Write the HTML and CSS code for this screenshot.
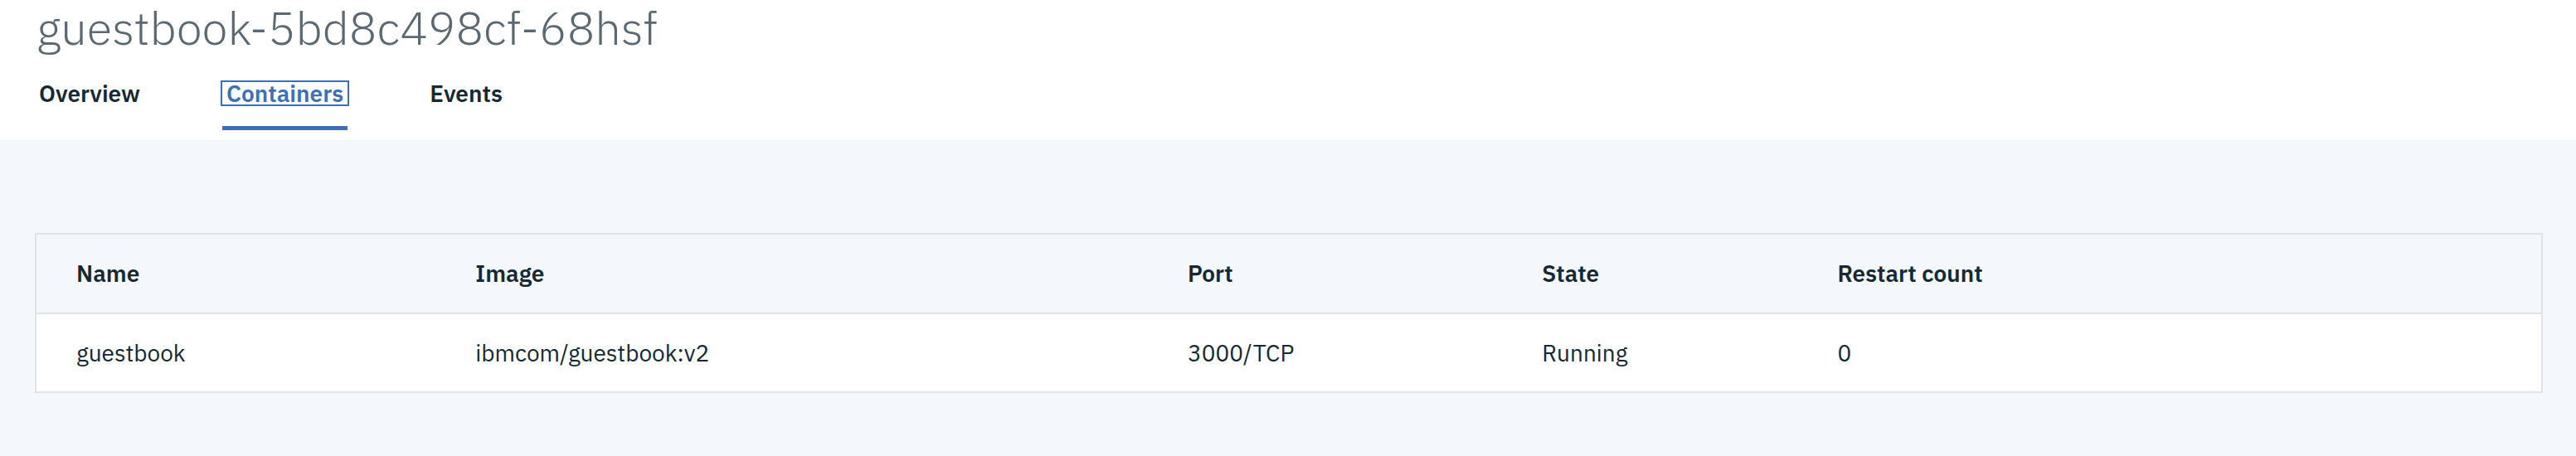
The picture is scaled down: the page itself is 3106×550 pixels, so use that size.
FILE: index.html
```html
<!DOCTYPE html>
<html lang="en">
<head>
<meta charset="utf-8">
<title>guestbook-5bd8c498cf-68hsf</title>
<link rel="stylesheet" href="styles.css">
</head>
<body>
  <header class="page-header">
    <h1 class="page-title">guestbook-5bd8c498cf-68hsf</h1>
    <nav class="tabs">
      <a class="tab" href="#">Overview</a>
      <a class="tab tab-selected" href="#"><span class="tab-focus">Containers</span></a>
      <a class="tab" href="#">Events</a>
    </nav>
  </header>
  <main class="content">
    <div class="table">
      <div class="row row-head">
        <div class="cell">Name</div>
        <div class="cell">Image</div>
        <div class="cell">Port</div>
        <div class="cell">State</div>
        <div class="cell">Restart count</div>
      </div>
      <div class="row row-body">
        <div class="cell">guestbook</div>
        <div class="cell">ibmcom/guestbook:v2</div>
        <div class="cell">3000/TCP</div>
        <div class="cell">Running</div>
        <div class="cell">0</div>
      </div>
    </div>
  </main>
</body>
</html>
```

FILE: styles.css
```css
* { box-sizing: border-box; }

html, body {
  margin: 0;
  padding: 0;
}

body {
  font-family: "IBM Plex Sans", Roboto, "Liberation Sans", sans-serif;
  background: #f4f7fb;
  color: #152935;
  height: 550px;
  overflow: hidden;
}

.page-header {
  background: #ffffff;
  padding: 0 0 12px 42px;
}

.page-title {
  margin: 0;
  font-size: 56px;
  line-height: 66px;
  font-weight: 300;
  color: #5a6872;
  padding-left: 2px;
}

.tabs {
  display: flex;
  gap: 94px;
  margin-top: 31px;
}

.tab {
  display: block;
  font-size: 28px;
  line-height: 32px;
  font-weight: 600;
  color: #152935;
  text-decoration: none;
  padding: 0 5px 23px;
  border-bottom: 5px solid transparent;
}

.tab-selected {
  color: #3d70b2;
  border-bottom-color: #3d70b2;
}

.tab-focus {
  display: inline-block;
  line-height: 27px;
  outline: 2px solid #3d70b2;
  outline-offset: 0;
  margin: 0 -5px;
  padding: 0 5px;
}

.content {
  padding: 112px 40px 0 42px;
}

.table {
  border: 2px solid #dfe3e6;
  font-size: 28px;
  line-height: 32px;
}

.row {
  display: grid;
  grid-template-columns: 481fr 858fr 427fr 356fr 896fr;
  align-items: center;
}

.row-head {
  height: 96px;
  font-weight: 600;
  background: #f4f7fb;
  border-bottom: 2px solid #dfe3e6;
}

.row-body {
  height: 93px;
  background: #ffffff;
}

.cell {
  padding-left: 48px;
  white-space: nowrap;
}
```
